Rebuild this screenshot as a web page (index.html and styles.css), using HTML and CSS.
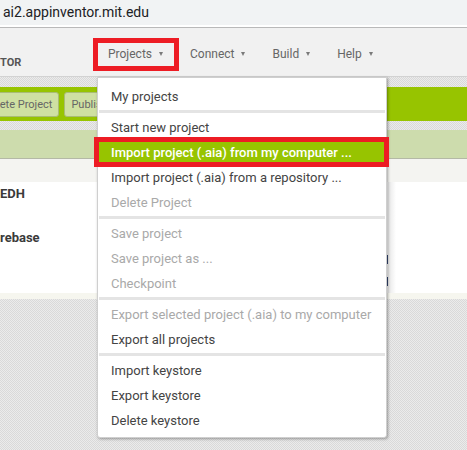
FILE: index.html
```html
<!DOCTYPE html>
<html>
<head>
<meta charset="utf-8">
<title>App Inventor</title>
<link rel="stylesheet" href="styles.css">
</head>
<body>
<div class="page">
  <div class="addr">ai2.appinventor.mit.edu</div>
  <header class="top">
    <div class="logo">TOR</div>
    <nav class="nav">
      <span class="nav-item">Projects<i class="caret"></i></span>
      <span class="nav-item">Connect<i class="caret"></i></span>
      <span class="nav-item">Build<i class="caret"></i></span>
      <span class="nav-item">Help<i class="caret"></i></span>
    </nav>
  </header>
  <div class="texture strip-a"></div>
  <div class="toolbar">
    <span class="btn btn-first">Delete Project</span>
    <span class="btn">Publish to Gallery</span>
  </div>
  <div class="texture strip-b"></div>
  <div class="band"></div>
  <div class="list-head"></div>
  <div class="list">
    <div class="names">
      <div class="name">EDH</div>
      <div class="name">rebase</div>
    </div>
    <div class="marks">
      <span class="mark mark-1"></span>
      <span class="mark mark-2"></span>
    </div>
    <div class="side"></div>
  </div>
  <div class="list-foot"></div>
  <div class="texture rest"></div>
</div>

<div class="menu">
  <div class="item">My projects</div>
  <div class="sep"></div>
  <div class="item">Start new project</div>
  <div class="item active">Import project (.aia) from my computer ...</div>
  <div class="item">Import project (.aia) from a repository ...</div>
  <div class="item disabled">Delete Project</div>
  <div class="sep"></div>
  <div class="item disabled">Save project</div>
  <div class="item disabled">Save project as ...</div>
  <div class="item disabled">Checkpoint</div>
  <div class="sep"></div>
  <div class="item disabled">Export selected project (.aia) to my computer</div>
  <div class="item">Export all projects</div>
  <div class="sep"></div>
  <div class="item">Import keystore</div>
  <div class="item">Export keystore</div>
  <div class="item">Delete keystore</div>
</div>

<div class="hl-box hl-projects"></div>
<div class="hl-box hl-import"></div>
</body>
</html>
```

FILE: styles.css
```css
* { box-sizing: border-box; }

html, body {
  margin: 0;
  padding: 0;
}

body {
  width: 467px;
  height: 450px;
  overflow: hidden;
  font-family: Roboto, "Liberation Sans", Arial, sans-serif;
  background: #ffffff;
  position: relative;
}

.page {
  display: flex;
  flex-direction: column;
  height: 450px;
}

.addr {
  height: 28px;
  padding: 0 0 0 3px;
  font-size: 14px;
  line-height: 25px;
  color: #202124;
  background: linear-gradient(#f1f3f4 0 25px, #ffffff 25px);
  border-bottom: 1px solid #b9b9b9;
  flex: none;
}

.top {
  height: 49px;
  flex: none;
  display: flex;
  background: #f1f1f1;
  border-bottom: 1px solid #d2d2d2;
}

.logo {
  width: 108px;
  padding-top: 28px;
  font-size: 11px;
  line-height: 14px;
  font-weight: 700;
  color: #555555;
}

.nav {
  display: flex;
  align-items: center;
  gap: 27px;
  padding-top: 3px;
}

.nav-item {
  display: flex;
  align-items: center;
  font-size: 12px;
  color: #666666;
}

.caret {
  display: block;
  width: 0;
  height: 0;
  margin-left: 7px;
  border-top: 4px solid #7a7a7a;
  border-left: 2.5px solid transparent;
  border-right: 2.5px solid transparent;
}

.texture {
  background: repeating-conic-gradient(#d9d9d9 0 25%, #ebebeb 0 50%) 0 0 / 2px 2px;
  flex: none;
}

.strip-a { height: 10px; }
.strip-b { height: 9px; }
.rest { flex: 1; }

.toolbar {
  height: 34px;
  flex: none;
  display: flex;
  align-items: center;
  gap: 5px;
  background: #97c400;
  overflow: hidden;
}

.btn {
  height: 25px;
  line-height: 23px;
  padding: 0 6px;
  font-size: 11px;
  color: #666666;
  white-space: nowrap;
  background: #cfe0a2;
  border: 1px solid #a9bc74;
  border-radius: 3px;
  flex: none;
}

.btn-first {
  margin-left: -23px;
}

.band {
  height: 29px;
  flex: none;
  background: #cddcad;
  border-bottom: 1px solid #b4b9a6;
}

.list-head {
  height: 23px;
  flex: none;
  background: #f4f4f1;
}

.list {
  height: 111px;
  flex: none;
  display: grid;
  grid-template-columns: 386px 2px 1fr;
  background: #ffffff;
}

.names {
  padding-top: 4px;
  display: flex;
  flex-direction: column;
  gap: 28px;
}

.name {
  font-size: 13px;
  line-height: 16px;
  font-weight: 700;
  color: #3a3a3a;
}

.marks {
  display: flex;
  flex-direction: column;
}

.mark {
  display: block;
  width: 2px;
  height: 9px;
  background: #33456f;
}

.mark-1 { margin-top: 73px; }
.mark-2 { margin-top: 13px; }

.side {
  background: linear-gradient(to right, #e6e6e6, #ffffff 8px);
}

.list-foot {
  height: 6px;
  flex: none;
  background: #f6f6ef;
}

/* dropdown menu overlay */
.menu {
  position: absolute;
  left: 97px;
  top: 77px;
  width: 290px;
  padding: 6px 0 4px;
  background: #ffffff;
  border: 1px solid #cfcfcf;
  border-radius: 0 0 3px 3px;
  box-shadow: 1px 1px 3px rgba(0, 0, 0, 0.35);
}

.item {
  height: 25px;
  line-height: 25px;
  padding-left: 13px;
  font-size: 13px;
  color: #444444;
  white-space: nowrap;
}

.item.disabled {
  color: #a9a9a9;
}

.item.active {
  background: #97c400;
  color: #ffffff;
  font-weight: 500;
}

.sep {
  height: 3px;
  margin: 1px 1px 2px;
  background: #e4e4e4;
}

/* red annotation boxes */
.hl-box {
  position: absolute;
  border: 5px solid #ed1c24;
}

.hl-projects {
  left: 93px;
  top: 38px;
  width: 86px;
  height: 33px;
}

.hl-import {
  left: 94px;
  top: 137px;
  width: 295px;
  height: 30px;
}
```
